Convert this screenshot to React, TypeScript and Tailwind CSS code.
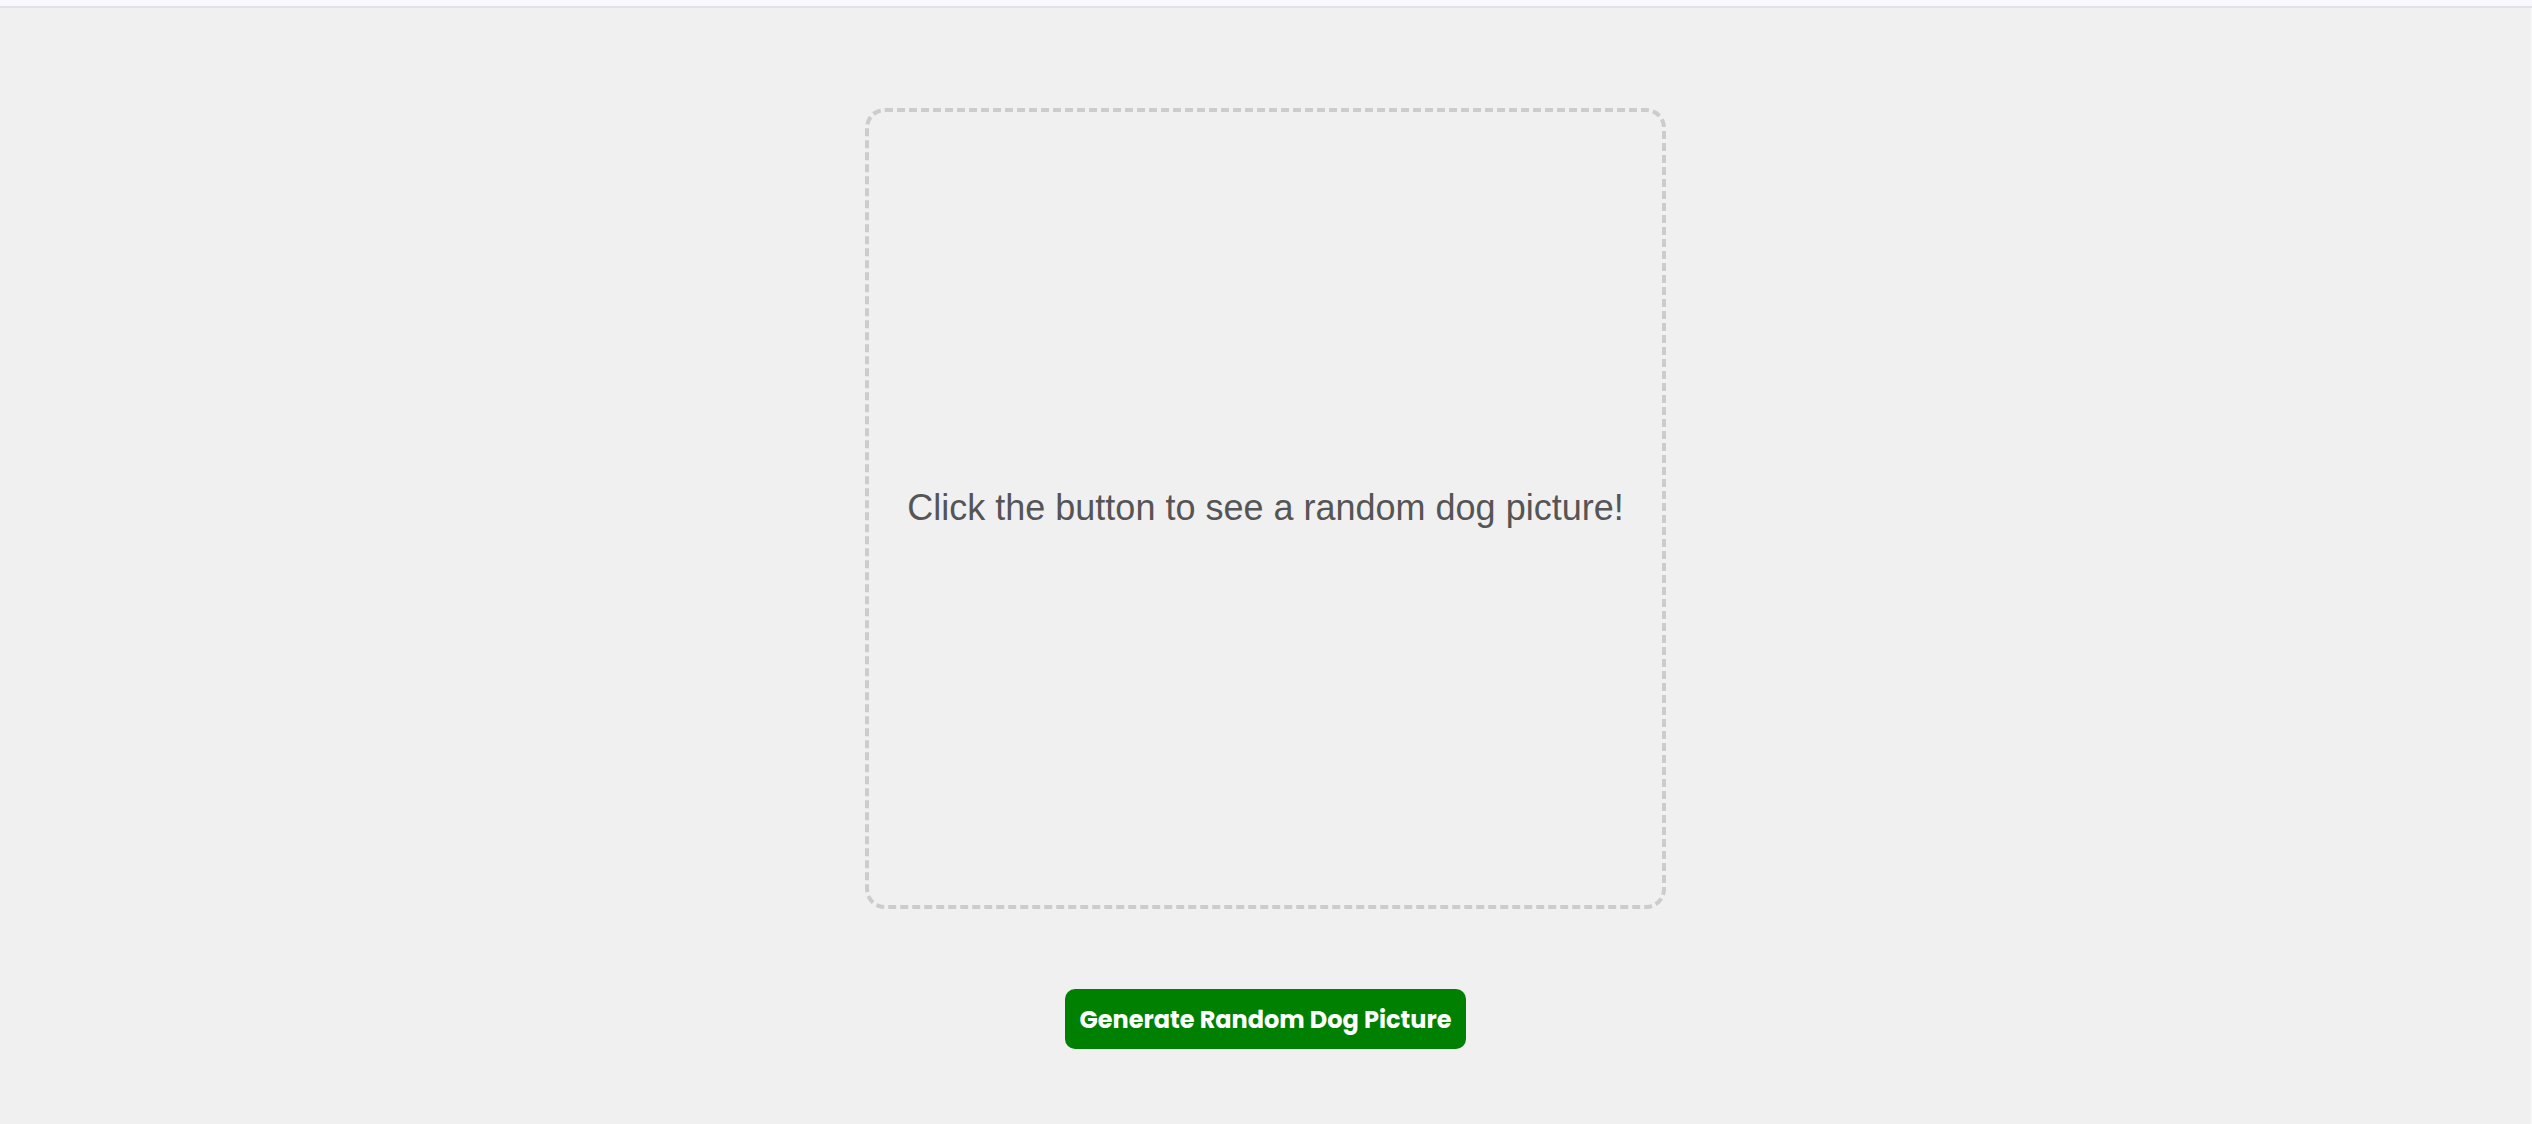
export default function App() {
  return (
    <div className="flex h-[1124px] w-full flex-col bg-[#fafafa]">
      <div className="h-2 w-full shrink-0 border-b-2 border-[#e1e1e9] bg-[#faf8ff]" />
      <main className="mr-px flex grow flex-col items-center bg-[#f0f0f0] pt-[100px]">
        <section className="flex h-[801px] w-[801px] items-center justify-center rounded-[20px] border-4 border-dashed border-[#cccccc]">
          <p className="whitespace-nowrap pb-0.5 font-['Liberation_Sans',Arial,sans-serif] text-[36px] leading-[44px] text-[#555555]">
            Click the button to see a random dog picture!
          </p>
        </section>
        <button className="mt-20 flex h-[60px] w-[401px] items-center justify-center whitespace-nowrap rounded-[10px] bg-[#008000] pt-0.5 font-['Poppins','Open_Sans',sans-serif] text-[24px] font-bold text-white">
          Generate Random Dog Picture
        </button>
      </main>
    </div>
  );
}
